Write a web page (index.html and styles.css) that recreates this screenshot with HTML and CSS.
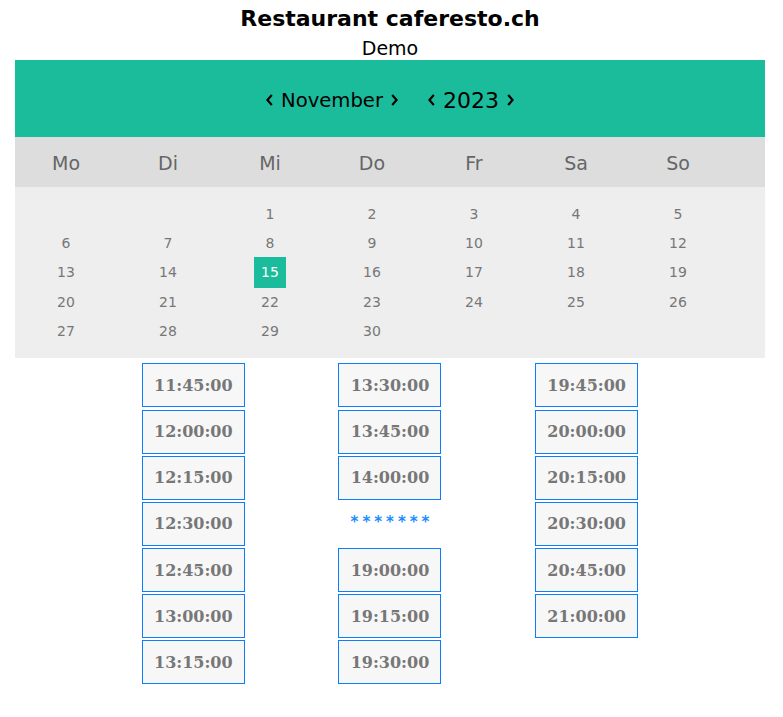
FILE: index.html
```html
<!DOCTYPE html>
<html lang="de">
<head>
    <meta charset="UTF-8">
    <meta name="viewport" content="width=device-width, initial-scale=1.0">
    <title>Restaurant caferesto.ch</title>
    <link rel="stylesheet" href="styles.css">
</head>
<body>
    <!-- Header -->
    <div class="page-header">
        <h1>Restaurant caferesto.ch</h1>
        <p>Demo</p>
    </div>

    <!-- Month selector -->
    <div class="month">
        <span class="month-name">
            <svg class="arrow" viewBox="0 0 7 12"><polyline points="5.8,1 1.4,6 5.8,11"/></svg>
            November
            <svg class="arrow" viewBox="0 0 7 12"><polyline points="1.2,1 5.6,6 1.2,11"/></svg>
        </span>
        <span class="year">
            <svg class="arrow" viewBox="0 0 7 12"><polyline points="5.8,1 1.4,6 5.8,11"/></svg>
            2023
            <svg class="arrow" viewBox="0 0 7 12"><polyline points="1.2,1 5.6,6 1.2,11"/></svg>
        </span>
    </div>

    <!-- Weekdays -->
    <ul class="weekdays">
        <li>Mo</li>
        <li>Di</li>
        <li>Mi</li>
        <li>Do</li>
        <li>Fr</li>
        <li>Sa</li>
        <li>So</li>
    </ul>

    <!-- Days -->
    <ul class="days">
        <li></li>
        <li></li>
        <li>1</li>
        <li>2</li>
        <li>3</li>
        <li>4</li>
        <li>5</li>
        <li>6</li>
        <li>7</li>
        <li>8</li>
        <li>9</li>
        <li>10</li>
        <li>11</li>
        <li>12</li>
        <li>13</li>
        <li>14</li>
        <li><span class="active">15</span></li>
        <li>16</li>
        <li>17</li>
        <li>18</li>
        <li>19</li>
        <li>20</li>
        <li>21</li>
        <li>22</li>
        <li>23</li>
        <li>24</li>
        <li>25</li>
        <li>26</li>
        <li>27</li>
        <li>28</li>
        <li>29</li>
        <li>30</li>
    </ul>

    <!-- Time slots -->
    <div class="times">
        <div class="time-column">
            <button class="time-button">11:45:00</button>
            <button class="time-button">12:00:00</button>
            <button class="time-button">12:15:00</button>
            <button class="time-button">12:30:00</button>
            <button class="time-button">12:45:00</button>
            <button class="time-button">13:00:00</button>
            <button class="time-button">13:15:00</button>
        </div>
        <div class="time-column">
            <button class="time-button">13:30:00</button>
            <button class="time-button">13:45:00</button>
            <button class="time-button">14:00:00</button>
            <div class="separator">*******</div>
            <button class="time-button">19:00:00</button>
            <button class="time-button">19:15:00</button>
            <button class="time-button">19:30:00</button>
        </div>
        <div class="time-column">
            <button class="time-button">19:45:00</button>
            <button class="time-button">20:00:00</button>
            <button class="time-button">20:15:00</button>
            <button class="time-button">20:30:00</button>
            <button class="time-button">20:45:00</button>
            <button class="time-button">21:00:00</button>
        </div>
    </div>
</body>
</html>
```

FILE: styles.css
```css
body {
    font-family: "DejaVu Sans", Verdana, sans-serif;
    margin: 0;
    padding: 6px 18px 0 15px;
    background-color: #fff;
    color: #000;
}

/* Header */
.page-header {
    text-align: center;
    margin-bottom: 1px;
}

.page-header h1 {
    margin: 0;
    font-size: 22px;
    line-height: 26px;
    font-weight: bold;
}

.page-header p {
    margin: 5px 0 0 0;
    font-size: 19px;
    line-height: 22px;
}

/* Month selector */
.month {
    background-color: #1abc9c;
    height: 77px;
    display: flex;
    justify-content: center;
    align-items: center;
    gap: 30px;
    padding-top: 3px;
    box-sizing: border-box;
}

.month-name,
.year {
    display: flex;
    align-items: center;
    gap: 8px;
}

.month-name {
    font-size: 19.6px;
}

.year {
    font-size: 22px;
}

.arrow {
    width: 7px;
    height: 12px;
    fill: none;
    stroke: #000;
    stroke-width: 2.2;
}

/* Weekdays */
.weekdays {
    margin: 0;
    padding: 0;
    list-style: none;
    background-color: #ddd;
    height: 50px;
    display: grid;
    grid-template-columns: repeat(7, 102px);
    align-items: center;
}

.weekdays li {
    text-align: center;
    font-size: 19px;
    color: #666;
    padding-top: 2px;
}

/* Days */
.days {
    margin: 0;
    padding: 12px 0 13px 0;
    list-style: none;
    background-color: #eee;
    display: grid;
    grid-template-columns: repeat(7, 102px);
    grid-auto-rows: 29.3px;
    align-items: center;
}

.days li {
    text-align: center;
    font-size: 14px;
    color: #777;
}

.days .active {
    display: inline-block;
    width: 32px;
    height: 31px;
    line-height: 31px;
    background-color: #1abc9c;
    color: #fff;
}

/* Time slots */
.times {
    width: 590px;
    margin: 5px auto 0 auto;
    display: grid;
    grid-template-columns: repeat(3, 1fr);
}

.time-column {
    display: flex;
    flex-direction: column;
    align-items: center;
    gap: 2.17px;
}

.time-button {
    width: 103px;
    height: 44px;
    padding: 0;
    border: 1px solid #0b7dff;
    background-color: #f7f7f7;
    color: #777;
    font-family: "DejaVu Serif", serif;
    font-weight: bold;
    font-size: 16px;
}

.separator {
    height: 44px;
    line-height: 41px;
    color: #1a8cff;
    font-family: "DejaVu Sans", sans-serif;
    font-weight: bold;
    font-size: 15px;
    letter-spacing: 4px;
    padding-left: 4px;
}
```
